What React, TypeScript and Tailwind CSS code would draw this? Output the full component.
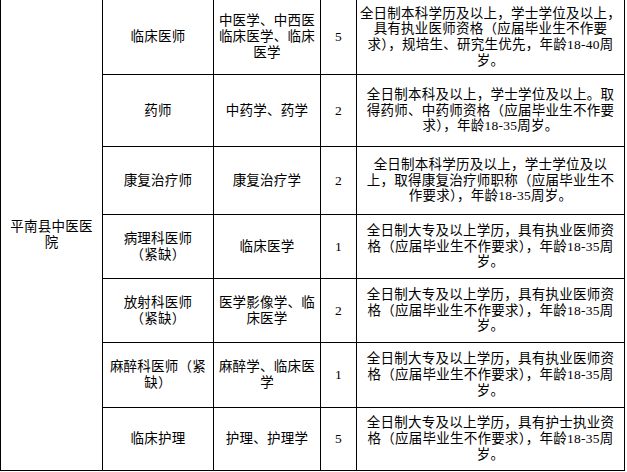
import React from "react";

type Row = {
  post: string[];
  major: string[];
  num: string;
  req: string[];
};

const rows: Row[] = [
  {
    post: ["临床医师"],
    major: ["中医学、中西医", "临床医学、临床", "医学"],
    num: "5",
    req: [
      "全日制本科学历及以上，学士学位及以上，",
      "具有执业医师资格（应届毕业生不作要",
      "求），规培生、研究生优先，年龄18-40周",
      "岁。",
    ],
  },
  {
    post: ["药师"],
    major: ["中药学、药学"],
    num: "2",
    req: [
      "全日制本科及以上，学士学位及以上。取",
      "得药师、中药师资格（应届毕业生不作要",
      "求），年龄18-35周岁。",
    ],
  },
  {
    post: ["康复治疗师"],
    major: ["康复治疗学"],
    num: "2",
    req: [
      "全日制本科学历及以上，学士学位及以",
      "上，取得康复治疗师职称（应届毕业生不",
      "作要求），年龄18-35周岁。",
    ],
  },
  {
    post: ["病理科医师", "（紧缺）"],
    major: ["临床医学"],
    num: "1",
    req: [
      "全日制大专及以上学历，具有执业医师资",
      "格（应届毕业生不作要求），年龄18-35周",
      "岁。",
    ],
  },
  {
    post: ["放射科医师", "（紧缺）"],
    major: ["医学影像学、临", "床医学"],
    num: "2",
    req: [
      "全日制大专及以上学历，具有执业医师资",
      "格（应届毕业生不作要求），年龄18-35周",
      "岁。",
    ],
  },
  {
    post: ["麻醉科医师（紧", "缺）"],
    major: ["麻醉学、临床医", "学"],
    num: "1",
    req: [
      "全日制大专及以上学历，具有执业医师资",
      "格（应届毕业生不作要求），年龄18-35周",
      "岁。",
    ],
  },
  {
    post: ["临床护理"],
    major: ["护理、护理学"],
    num: "5",
    req: [
      "全日制大专及以上学历，具有护士执业资",
      "格（应届毕业生不作要求），年龄18-35周",
      "岁。",
    ],
  },
];

function Lines({ lines }: { lines: string[] }) {
  return (
    <div className="flex flex-col items-center">
      {lines.map((l, i) => (
        <div key={i} className="whitespace-nowrap">
          {l}
        </div>
      ))}
    </div>
  );
}

const cell = "bg-white flex items-center justify-center text-center";

export default function App() {
  return (
    <div className="w-[627px] h-[472px] bg-white">
      <div
        className="grid w-fit bg-black gap-px px-px pb-px grid-cols-[101px_110px_106px_35px_267px] grid-rows-[74px_71px_67px_63px_63px_64px_62px] text-black text-[13.5px] leading-[15.7px] tracking-[0.25px]"
        style={{ fontFamily: '"Liberation Serif", "Noto Sans CJK SC", serif' }}
      >
        <div className={`${cell} row-span-7 col-start-1 row-start-1`}>
          <Lines lines={["平南县中医医", "院"]} />
        </div>
        {rows.map((r, i) => (
          <React.Fragment key={i}>
            <div className={`${cell} col-start-2`}>
              <Lines lines={r.post} />
            </div>
            <div className={`${cell} col-start-3`}>
              <Lines lines={r.major} />
            </div>
            <div className={`${cell} col-start-4`}>{r.num}</div>
            <div className={`${cell} col-start-5 overflow-visible`}>
              <Lines lines={r.req} />
            </div>
          </React.Fragment>
        ))}
      </div>
    </div>
  );
}
